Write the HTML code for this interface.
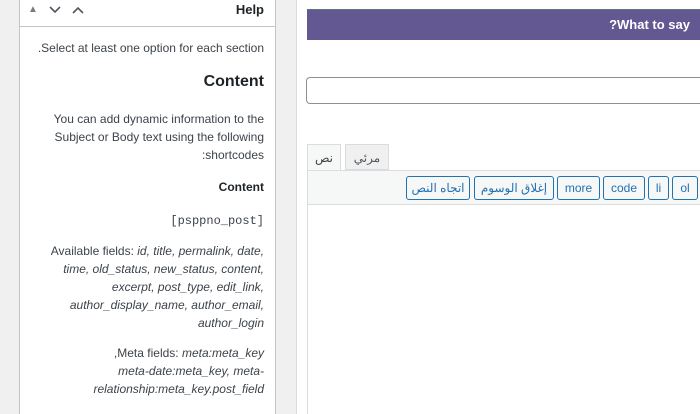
<!DOCTYPE html>
<html><head><meta charset="utf-8"><style>
*{margin:0;padding:0;box-sizing:border-box}
html,body{width:700px;height:414px;overflow:hidden}
body{background:#f0f0f1;font-family:"Liberation Sans","Noto Sans CJK SC",sans-serif;color:#3c434a;position:relative;font-size:12px}
.a{position:absolute}
.lp{left:19px;top:0;width:257px;height:414px;background:#fff;border-left:1px solid #c3c4c7;border-right:1px solid #c3c4c7}
.r{right:11px;text-align:right;white-space:nowrap}
.rp{left:296px;top:0;width:404px;height:414px;background:#fff;border-left:1px solid #dcdcde}
.btn{position:absolute;top:176px;height:24px;border:1px solid #2271b1;border-radius:3px;color:#2271b1;background:#f6f7f7;font-size:12px;line-height:22px;text-align:center}
i{font-style:italic}
</style></head><body>
<div class="a lp">
 <div class="a" style="left:0;top:0;width:255px;height:27px;border-bottom:1px solid #c3c4c7"></div>
 <div class="a" style="left:8px;top:4px;font-size:10px;color:#787c82">▲</div>
 <svg class="a" style="left:28px;top:5px" width="14" height="10"><path d="M2 2l5 5 5-5" stroke="#50575e" stroke-width="1.6" fill="none"/></svg>
 <svg class="a" style="left:51px;top:5px" width="14" height="10"><path d="M2 8l5-5 5 5" stroke="#50575e" stroke-width="1.6" fill="none"/></svg>
 <div class="a r" style="top:2px;font-weight:bold;font-size:13px;color:#1d2327">Help</div>
 <div class="a r" style="top:41px">.Select at least one option for each section</div>
 <div class="a r" style="top:73px;font-weight:bold;font-size:16px;color:#1d2327">Content</div>
 <div class="a r" style="top:110px;line-height:18px">You can add dynamic information to the<br>Subject or Body text using the following<br>:shortcodes</div>
 <div class="a r" style="top:180px;font-weight:bold;color:#1d2327">Content</div>
 <div class="a r" style="top:214px;font-family:'Liberation Mono',monospace;font-size:12px">[psppno_post]</div>
 <div class="a r" style="top:242px;line-height:18px">Available fields: <i>id, title, permalink, date,</i><br><i>time, old_status, new_status, content,</i><br><i>excerpt, post_type, edit_link,</i><br><i>author_display_name, author_email,</i><br><i>author_login</i></div>
 <div class="a r" style="top:344px;line-height:18px">,Meta fields: <i>meta:meta_key</i><br><i>meta-date:meta_key, meta-</i><br><i>relationship:meta_key.post_field</i></div>
</div>
<div class="a rp"></div>
<div class="a" style="left:307px;top:9px;width:393px;height:31px;background:#645893;border-top:1px solid #5a7a7a"></div>
<div class="a" style="left:600px;top:17px;color:#fff;font-weight:bold;font-size:13px;width:90px;text-align:right">?What to say</div>
<div class="a" style="left:306px;top:77px;width:394px;height:27px;border:1px solid #8c8f94;border-right:none;border-radius:4px 0 0 4px;background:#fff"></div>
<div class="a" style="left:307px;top:144px;width:34px;height:27px;background:#f6f7f7;border:1px solid #dcdcde;border-bottom:none;text-align:center;line-height:26px">نص</div>
<div class="a" style="left:345px;top:144px;width:44px;height:26px;background:#f0f0f1;border:1px solid #dcdcde;text-align:center;line-height:26px;color:#50575e">مرئي</div>
<div class="a" style="left:307px;top:170px;width:393px;height:35px;background:#f6f7f7;border:1px solid #dcdcde;border-right:none"></div>
<div class="a" style="left:307px;top:205px;width:393px;height:209px;background:#fff;border-left:1px solid #dcdcde"></div>
<div class="btn" style="left:406px;width:64px">اتجاه النص</div>
<div class="btn" style="left:474px;width:80px">إغلاق الوسوم</div>
<div class="btn" style="left:557px;width:43px">more</div>
<div class="btn" style="left:603px;width:42px">code</div>
<div class="btn" style="left:648px;width:21px">li</div>
<div class="btn" style="left:672px;width:26px">ol</div>
</body></html>
